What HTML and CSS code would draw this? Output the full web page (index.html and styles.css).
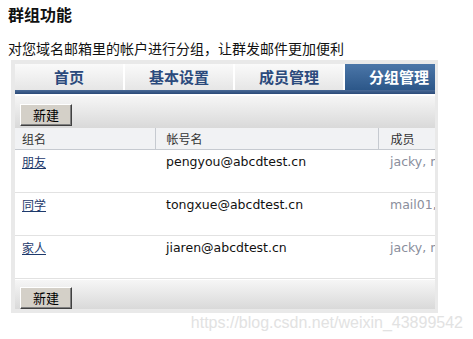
FILE: index.html
```html
<!DOCTYPE html>
<html lang="zh-CN">
<head>
    <meta charset="UTF-8">
    <title>群组功能</title>
    <link rel="stylesheet" href="styles.css">
</head>
<body>
    <h1>群组功能</h1>
    <p class="intro">对您域名邮箱里的帐户进行分组，让群发邮件更加便利</p>

    <div class="frame">
        <div class="panel">
            <div class="tabs">
                <div class="tab">首页</div>
                <div class="tab">基本设置</div>
                <div class="tab">成员管理</div>
                <div class="tab active">分组管理</div>
            </div>
            <div class="tab-bar"></div>

            <div class="toolbar">
                <button class="btn">新建</button>
            </div>

            <table class="grid">
                <thead>
                    <tr>
                        <th class="col-name">组名</th>
                        <th class="col-account">帐号名</th>
                        <th class="col-members">成员</th>
                    </tr>
                </thead>
                <tbody>
                    <tr>
                        <td class="col-name"><a href="#">朋友</a></td>
                        <td class="col-account">pengyou@abcdtest.cn</td>
                        <td class="col-members">jacky, mail01</td>
                    </tr>
                    <tr>
                        <td class="col-name"><a href="#">同学</a></td>
                        <td class="col-account">tongxue@abcdtest.cn</td>
                        <td class="col-members">mail01, jacky</td>
                    </tr>
                    <tr>
                        <td class="col-name"><a href="#">家人</a></td>
                        <td class="col-account">jiaren@abcdtest.cn</td>
                        <td class="col-members">jacky, mail01</td>
                    </tr>
                </tbody>
            </table>

            <div class="toolbar bottom">
                <button class="btn">新建</button>
            </div>
        </div>
    </div>

    <div class="watermark">https://blog.csdn.net/weixin_43899542</div>
</body>
</html>
```

FILE: styles.css
```css
body {
    margin: 0;
    padding: 0 8px;
    background: #fff;
    color: #111;
    font-family: "Noto Sans CJK SC", "DejaVu Sans", sans-serif;
}

h1 {
    margin: 4px 0 0;
    font-size: 16px;
    line-height: 20px;
    font-weight: bold;
}

.intro {
    margin: 15px 0 0;
    font-size: 14px;
    line-height: 18px;
}

.frame {
    width: 420px;
    margin: 3px 0 0 3px;
    padding: 4px 3px 4px 4px;
    background: #e9e9e9;
}

.panel {
    overflow: hidden;
    background: #fff;
}

.tabs {
    display: flex;
    gap: 2px;
    height: 26px;
    background: #fff;
    overflow: hidden;
}

.tab {
    flex: 0 0 108px;
    text-align: center;
    font-size: 15px;
    font-weight: bold;
    line-height: 26px;
    color: #2b4a7c;
    background: linear-gradient(#fafafa, #e6e6e6);
}

.tab.active {
    color: #fff;
    background: linear-gradient(#4b76a8, #2c5789);
}

.tab-bar {
    height: 4px;
    background: linear-gradient(#4a6a96, #2b4a78);
    border-bottom: 2px solid #fff;
}

.toolbar {
    height: 32px;
    padding: 5px 0 0 5px;
    box-sizing: border-box;
    background: linear-gradient(#f6f6f6, #d9d9d9);
}

.toolbar.bottom {
    height: 30px;
    padding-top: 4px;
    border-top: 1px solid #fff;
}

.btn {
    width: 52px;
    height: 22px;
    padding: 0;
    font-family: "Noto Sans CJK SC", sans-serif;
    font-size: 13px;
    line-height: 18px;
    color: #000;
    background: #d4d0c8;
    border: 1px solid;
    border-color: #fff #404040 #404040 #fff;
    box-shadow: inset -1px -1px 0 #808080;
}

.grid {
    border-collapse: collapse;
    table-layout: fixed;
    width: 420px;
}

.grid th,
.grid td {
    box-sizing: border-box;
}

.grid th {
    height: 21px;
    padding: 0;
    font-size: 12px;
    font-weight: normal;
    text-align: left;
    color: #333;
    background: #f1f2f4;
    border-bottom: 1px solid #c6cad0;
}

.grid th + th {
    border-left: 1px solid #c6cad0;
}

.grid td {
    height: 43px;
    padding: 3px 0 0;
    vertical-align: top;
    font-family: "DejaVu Sans", "Noto Sans CJK SC", sans-serif;
    font-size: 12.5px;
    line-height: 18px;
    white-space: nowrap;
    overflow: hidden;
    border-bottom: 1px solid #e2e2e2;
}

.col-name {
    width: 140px;
    padding-left: 7px !important;
}

.col-account {
    width: 223px;
    padding-left: 11px !important;
}

.col-members {
    padding-left: 12px !important;
}

.grid td.col-members {
    color: #8a8e9c;
}

.grid a {
    font-family: "Noto Sans CJK SC", sans-serif;
    font-size: 12px;
    color: #1e3a6c;
    text-decoration: underline;
}

.watermark {
    text-align: right;
    margin-right: 2px;
    font-family: "Liberation Sans", Arial, sans-serif;
    font-size: 16px;
    line-height: 20px;
    color: #e2e2e2;
}
```
